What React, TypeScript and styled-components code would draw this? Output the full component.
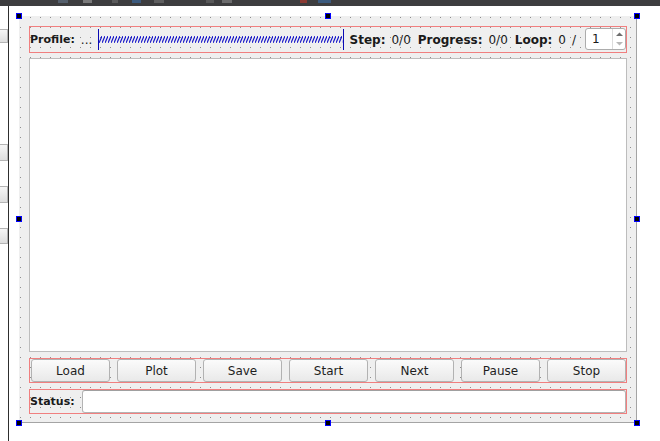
import styled, { createGlobalStyle } from 'styled-components';

const GlobalStyle = createGlobalStyle`
    html, body {
        margin: 0;
        padding: 0;
        background: #ffffff;
    }

    body {
        width: 660px;
        height: 441px;
        overflow: hidden;
        font-family: 'DejaVu Sans', 'Liberation Sans', sans-serif;
        color: #1c1c1c;
    }
`;

// bits of toolbar icons cut off at the top edge of the shot
const toolbarBits = [
    { x: 58, w: 10, color: '#66768a' },
    { x: 83, w: 9, color: '#a4a4a4' },
    { x: 112, w: 6, color: '#6e6e6e' },
    { x: 132, w: 9, color: '#3b6ea8' },
    { x: 154, w: 10, color: '#777777' },
    { x: 206, w: 8, color: '#6a6a6a' },
    { x: 222, w: 10, color: '#8c8c8c' },
    { x: 300, w: 7, color: '#c0392b' },
    { x: 318, w: 13, color: '#3b6ea8' },
];

const buttons = ['Load', 'Plot', 'Save', 'Start', 'Next', 'Pause', 'Stop'];

const SpringPattern = () => (
    <SpringSvg>
        <defs>
            <pattern id="spring" width="3" height="7" patternUnits="userSpaceOnUse">
                <path d="M0 7 L3 0" stroke="#1414c8" strokeWidth="1.1" fill="none" />
            </pattern>
        </defs>
        <rect x="0" y="7" width="100%" height="7" fill="url(#spring)" />
    </SpringSvg>
);

const SpinArrows = () => (
    <svg width="9" height="16" viewBox="0 0 9 16">
        <path d="M1 5 L4.5 1.5 L8 5 Z" fill="#6e6e6e" />
        <path d="M1 11 L4.5 14.5 L8 11 Z" fill="#b8b8b8" />
    </svg>
);

const App = () => {
    let prev = 0;
    return (
        <Page>
            <GlobalStyle />
            <TopBar>
                {toolbarBits.map((bit) => {
                    const offset = bit.x - prev;
                    prev = bit.x + bit.w;
                    return (
                        <ToolbarBit
                            key={bit.x}
                            $color={bit.color}
                            style={{ marginLeft: offset, width: bit.w }}
                        />
                    );
                })}
            </TopBar>
            <Body>
                <Dock>
                    <DockStub $top={23} $height={14} />
                    <DockStub $top={101} $height={17} />
                    <DockStub $top={25} $height={17} />
                    <DockStub $top={25} $height={16} />
                </Dock>
                <Canvas>
                    <Form>
                        <Handle $x="left" $y="top" />
                        <Handle $x="center" $y="top" />
                        <Handle $x="right" $y="top" />
                        <Handle $x="left" $y="middle" />
                        <Handle $x="right" $y="middle" />
                        <Handle $x="left" $y="bottom" />
                        <Handle $x="center" $y="bottom" />
                        <Handle $x="right" $y="bottom" />

                        <TopRow>
                            <BoldLabel $small>Profile:</BoldLabel>
                            <ValueLabel>...</ValueLabel>
                            <Spring>
                                <SpringPattern />
                            </Spring>
                            <BoldLabel>Step:</BoldLabel>
                            <ValueLabel $gap={7}>0/0</ValueLabel>
                            <BoldLabel>Progress:</BoldLabel>
                            <ValueLabel $gap={7}>0/0</ValueLabel>
                            <BoldLabel>Loop:</BoldLabel>
                            <ValueLabel>0</ValueLabel>
                            <ValueLabel $gap={9}>/</ValueLabel>
                            <SpinBox>
                                <SpinValue>1</SpinValue>
                                <SpinButtons>
                                    <SpinArrows />
                                </SpinButtons>
                            </SpinBox>
                        </TopRow>

                        <TextEdit />

                        <ButtonRow>
                            {buttons.map((label) => (
                                <PushButton key={label}>{label}</PushButton>
                            ))}
                        </ButtonRow>

                        <StatusRow>
                            <BoldLabel $small $gap={0}>
                                Status:
                            </BoldLabel>
                            <LineEdit />
                        </StatusRow>
                    </Form>
                </Canvas>
            </Body>
        </Page>
    );
};

export default App;

const Page = styled.div`
    display: flex;
    flex-direction: column;
    width: 660px;
    height: 441px;
`;

const TopBar = styled.div`
    display: flex;
    align-items: flex-start;
    height: 6px;
    background: #3d3d3f;
    flex-shrink: 0;
`;

const ToolbarBit = styled.span<{ $color: string }>`
    height: 3px;
    background: ${(p) => p.$color};
    opacity: 0.6;
`;

const Body = styled.div`
    display: flex;
    flex: 1;
    min-height: 0;
`;

const Dock = styled.div`
    display: flex;
    flex-direction: column;
    width: 8px;
    border-right: 1px solid #2e2e2e;
    background: #ffffff;
    flex-shrink: 0;
`;

const DockStub = styled.div<{ $top: number; $height: number }>`
    margin-top: ${(p) => p.$top}px;
    height: ${(p) => p.$height}px;
    box-sizing: border-box;
    border: 1px solid #b4b4b4;
    border-left: none;
    background: linear-gradient(#f6f6f6, #dedede);
`;

const Canvas = styled.div`
    flex: 1;
    padding: 10px 0 0 10px;
    background: #ffffff;
`;

const Form = styled.div`
    position: relative;
    box-sizing: border-box;
    width: 618px;
    height: 407px;
    padding: 10px 9px 0 10px;
    display: flex;
    flex-direction: column;
    border-right: 1px solid #a4a4a4;
    border-bottom: 1px solid #a4a4a4;
    background-color: #8e8e8e;
    background-image: linear-gradient(to bottom, transparent 1px, #efefef 1px),
        linear-gradient(to right, transparent 1px, #efefef 1px);
    background-size: 10px 10px;
    background-position: 1px 1px;
`;

const Handle = styled.span<{
    $x: 'left' | 'center' | 'right';
    $y: 'top' | 'middle' | 'bottom';
}>`
    position: absolute;
    box-sizing: border-box;
    width: 6px;
    height: 6px;
    background: #000000;
    border: 1px solid #0000ff;
    z-index: 2;
    ${(p) =>
        p.$x === 'left' ? 'left: -3px;' : p.$x === 'right' ? 'right: -4px;' : 'left: calc(50% - 3px);'}
    ${(p) =>
        p.$y === 'top' ? 'top: -3px;' : p.$y === 'bottom' ? 'bottom: -4px;' : 'top: calc(50% - 3px);'}
`;

const LayoutBox = styled.div`
    box-sizing: border-box;
    display: flex;
    align-items: center;
    border: 1px solid #f07f7f;
    flex-shrink: 0;
`;

const TopRow = styled(LayoutBox)`
    height: 27px;
`;

const BoldLabel = styled.span<{ $gap?: number; $small?: boolean }>`
    font-size: ${(p) => (p.$small ? 11 : 12)}px;
    font-weight: bold;
    color: #1a1a1a;
    white-space: nowrap;
    flex-shrink: 0;
    margin-right: ${(p) => p.$gap ?? 6}px;
`;

const ValueLabel = styled.span<{ $gap?: number }>`
    font-size: 12px;
    color: #1a1a1a;
    white-space: nowrap;
    flex-shrink: 0;
    margin-right: ${(p) => p.$gap ?? 6}px;
`;

const Spring = styled.div`
    flex: 1;
    box-sizing: border-box;
    height: 21px;
    margin-right: 6px;
    border-left: 1px solid #0a0ab4;
    border-right: 1px solid #0a0ab4;
`;

const SpringSvg = styled.svg`
    display: block;
    width: 100%;
    height: 21px;
`;

const SpinBox = styled.div`
    box-sizing: border-box;
    display: flex;
    flex-shrink: 0;
    width: 41px;
    height: 22px;
    margin-top: -2px;
    background: #ffffff;
    border: 1px solid #acacac;
    border-radius: 3px;
`;

const SpinValue = styled.span`
    flex: 1;
    padding-left: 6px;
    font-size: 12px;
    line-height: 20px;
    color: #1a1a1a;
`;

const SpinButtons = styled.div`
    display: flex;
    align-items: center;
    justify-content: center;
    width: 12px;
    border-left: 1px solid #dcdcdc;
`;

const TextEdit = styled.div`
    box-sizing: border-box;
    height: 294px;
    margin-top: 5px;
    background: #ffffff;
    border: 1px solid #bdbdbd;
    flex-shrink: 0;
`;

const ButtonRow = styled(LayoutBox)`
    height: 25px;
    margin-top: 6px;
    padding-left: 1px;
    gap: 7px;
`;

const PushButton = styled.button`
    flex: 1;
    box-sizing: border-box;
    height: 23px;
    padding: 0;
    font-family: 'DejaVu Sans', sans-serif;
    font-size: 12px;
    color: #1e1e1e;
    background: linear-gradient(#fbfbfb, #e9e9e9);
    border: 1px solid #b2b2b2;
    border-radius: 3px;
`;

const StatusRow = styled(LayoutBox)`
    height: 25px;
    margin-top: 6px;
    justify-content: space-between;
`;

const LineEdit = styled.div`
    box-sizing: border-box;
    flex-shrink: 0;
    width: 544px;
    height: 23px;
    background: #ffffff;
    border: 1px solid #b4b4b4;
    border-top-color: #a0a0a0;
    border-radius: 3px;
`;
